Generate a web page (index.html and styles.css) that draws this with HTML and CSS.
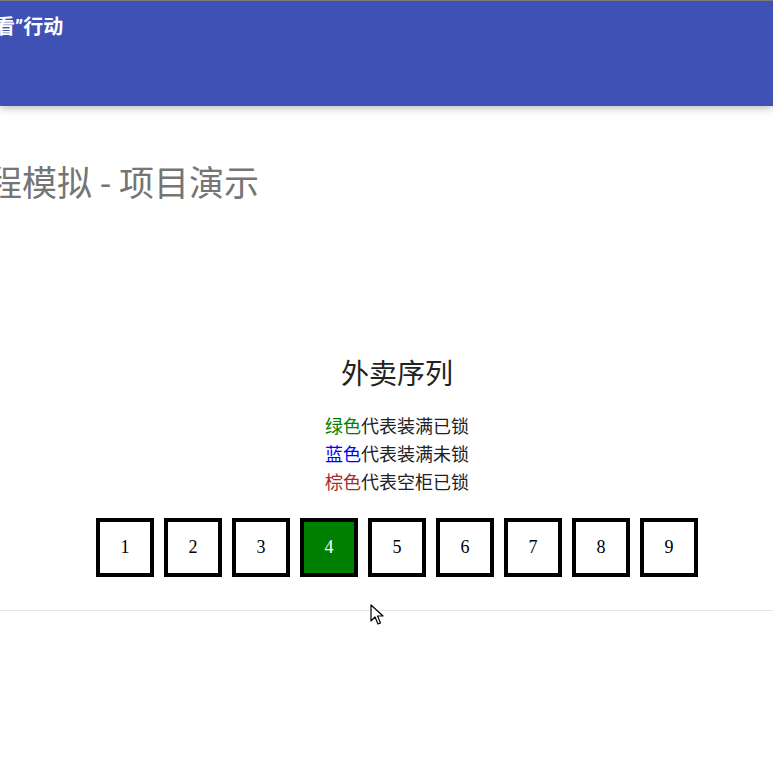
FILE: index.html
```html
<!DOCTYPE html>
<html lang="zh">
<head>
<meta charset="utf-8">
<link rel="stylesheet" href="styles.css">
</head>
<body>
<header class="appbar">
  <div class="appbar-title">看”行动</div>
</header>
<main class="page">
  <h1 class="page-title">程模拟 - 项目演示</h1>
  <section class="demo">
    <h2 class="demo-heading">外卖序列</h2>
    <div class="legend">
      <div><span class="c-green">绿色</span>代表装满已锁</div>
      <div><span class="c-blue">蓝色</span>代表装满未锁</div>
      <div><span class="c-brown">棕色</span>代表空柜已锁</div>
    </div>
    <div class="slots">
      <div class="slot">1</div>
      <div class="slot">2</div>
      <div class="slot">3</div>
      <div class="slot slot-green">4</div>
      <div class="slot">5</div>
      <div class="slot">6</div>
      <div class="slot">7</div>
      <div class="slot">8</div>
      <div class="slot">9</div>
    </div>
  </section>
  <hr class="divider">
</main>
<svg class="cursor" width="14" height="22" viewBox="0 0 14 22">
  <path d="M1 1 L1 17 L5 13 L8 20 L10.5 19 L7.5 12 L13 12 Z" fill="#fff" stroke="#000" stroke-width="1.2" stroke-linejoin="round"/>
</svg>
</body>
</html>
```
FILE: styles.css
```css
html, body {
  margin: 0;
  padding: 0;
  background: #fff;
  overflow: hidden;
}
body {
  font-family: Roboto, "Noto Sans CJK SC", sans-serif;
  width: 773px;
  height: 778px;
  position: relative;
}
.appbar {
  height: 105px;
  background: #3f51b5;
  border-top: 1px solid #7b7b7b;
  box-shadow: 0 2px 8px rgba(0, 0, 0, 0.28);
  overflow: hidden;
  position: relative;
  z-index: 1;
}
.appbar-title {
  color: #fff;
  font-weight: 700;
  font-size: 20px;
  line-height: 28px;
  padding-top: 12px;
  margin-left: -5px;
  white-space: nowrap;
}
.page {
  overflow: hidden;
}
.page-title {
  margin: 55px 0 0 -13px;
  font-size: 35px;
  line-height: 48px;
  font-weight: 400;
  color: #757575;
  white-space: nowrap;
}
.demo {
  margin-top: 146px;
  padding-left: 21px;
  display: flex;
  flex-direction: column;
  align-items: center;
}
.demo-heading {
  margin: 0;
  font-size: 28px;
  line-height: 40px;
  font-weight: 400;
  color: #222;
}
.legend {
  margin-top: 18px;
  font-size: 18px;
  line-height: 28px;
  color: #222;
  text-align: center;
}
.c-green { color: #008000; }
.c-blue { color: #0000ff; }
.c-brown { color: #a52a2a; }
.slots {
  margin-top: 21px;
  display: flex;
  gap: 10px;
}
.slot {
  width: 50px;
  height: 51px;
  border: 4px solid #000;
  display: flex;
  align-items: center;
  justify-content: center;
  font-family: "Liberation Serif", "DejaVu Serif", serif;
  font-size: 18px;
  color: #000;
  background: #fff;
}
.slot-green {
  background: #008000;
  color: #fff;
}
.divider {
  margin: 33px 0 0;
  border: 0;
  border-top: 1px solid #e6e6e6;
  height: 0;
}
.cursor {
  position: absolute;
  left: 370px;
  top: 604px;
}
```
